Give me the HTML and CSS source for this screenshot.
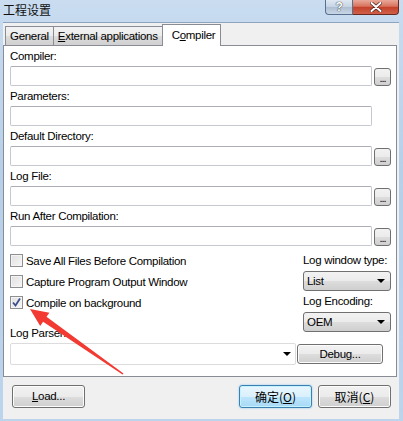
FILE: index.html
```html
<!DOCTYPE html>
<html lang="zh">
<head>
    <meta charset="UTF-8">
    <title>工程设置</title>
    <link rel="stylesheet" href="styles.css">
</head>
<body>
    <div class="window">
        <div class="titlebar">
            <div class="title">工程设置</div>
            <div class="caption">
                <div class="cap-help">?</div>
                <div class="cap-close">
                    <svg width="12" height="10" viewBox="0 0 12 10"><path d="M1.5 1 L10.5 9 M10.5 1 L1.5 9" stroke="#4a2520" stroke-width="3.4" stroke-linecap="round"/><path d="M1.5 1 L10.5 9 M10.5 1 L1.5 9" stroke="#fff" stroke-width="2" stroke-linecap="round"/></svg>
                </div>
            </div>
        </div>

        <div class="client">
            <div class="tabs">
                <div class="tab">General</div>
                <div class="tab"><u>E</u>xternal applications</div>
                <div class="tab active">C<u>o</u>mpiler</div>
            </div>

            <div class="panel">
                <div class="label">Compiler:</div>
                <div class="field-row"><div class="input"></div><div class="browse">...</div></div>
                <div class="label">Parameters:</div>
                <div class="field-row"><div class="input"></div></div>
                <div class="label">Default Directory:</div>
                <div class="field-row"><div class="input"></div><div class="browse">...</div></div>
                <div class="label">Log File:</div>
                <div class="field-row"><div class="input"></div><div class="browse">...</div></div>
                <div class="label">Run After Compilation:</div>
                <div class="field-row"><div class="input"></div><div class="browse">...</div></div>

                <div class="options">
                    <div class="checks">
                        <div class="check"><span class="box"></span>Save All Files Before Compilation</div>
                        <div class="check"><span class="box"></span>Capture Program Output Window</div>
                        <div class="check"><span class="box checked"><svg width="11" height="11" viewBox="0 0 11 11"><path d="M2 5.5 L4.5 8.5 L9 1.5" fill="none" stroke="#3d4f8a" stroke-width="1.8"/></svg></span>Compile on background</div>
                        <div class="parser-label">Log Parser:</div>
                    </div>
                    <div class="side">
                        <div class="side-label">Log window type:</div>
                        <div class="select">List<span class="tri"></span></div>
                        <div class="side-label">Log Encoding:</div>
                        <div class="select">OEM<span class="tri"></span></div>
                    </div>
                </div>

                <div class="parser-row">
                    <div class="combo"><span class="tri"></span></div>
                    <div class="btn debug">Debug...</div>
                </div>
            </div>

            <div class="footer">
                <div class="btn wide"><u>L</u>oad...</div>
                <div class="footer-right">
                    <div class="btn wide default">确定(<u>O</u>)</div>
                    <div class="btn wide">取消(<u>C</u>)</div>
                </div>
            </div>
        </div>

        <svg class="arrow" width="403" height="421" viewBox="0 0 403 421">
            <polygon points="30,309 49.4,312.7 46.5,316.8 123.5,373.6 122.5,374.4 43.1,321.8 40.2,325.9" fill="#f23a32"/>
        </svg>
    </div>
</body>
</html>
```

FILE: styles.css
```css
html, body {
    margin: 0;
    padding: 0;
}
body {
    width: 403px;
    height: 421px;
    overflow: hidden;
    font-family: "Liberation Sans", Arial, sans-serif;
    font-size: 11px;
    letter-spacing: -0.3px;
    color: #000;
    background: linear-gradient(180deg, #c9dcf0 0%, #b7d0ea 40%, #bcd4ec 100%);
}
.window {
    position: relative;
    height: 421px;
}
.titlebar {
    height: 22px;
    display: flex;
    justify-content: space-between;
    padding-left: 3px;
}
.title {
    font-family: "Noto Sans CJK SC", sans-serif;
    font-size: 12px;
    letter-spacing: 0;
    line-height: 20px;
    color: #111;
}
.caption {
    display: flex;
    margin-right: 4px;
    height: 15px;
}
.cap-help, .cap-close {
    height: 14px;
    border: 1px solid #57708f;
    border-top: none;
    display: flex;
    align-items: center;
    justify-content: center;
}
.cap-help {
    width: 26px;
    border-radius: 0 0 0 4px;
    background: linear-gradient(180deg, #dfe8f2 0%, #c4d3e4 50%, #aebfd3 51%, #c8d6e6 100%);
    color: #fff;
    font-weight: bold;
    font-size: 12px;
    text-shadow: 0 0 1px #333, 0 0 1px #333;
}
.cap-close {
    width: 45px;
    border-left: none;
    border-color: #6b2a20;
    border-radius: 0 0 4px 0;
    background: linear-gradient(180deg, #e9a99a 0%, #d8735e 45%, #c4412a 52%, #d0604a 100%);
}
.client {
    margin: 0 4px 0 3px;
    height: 396px;
    background: #f0f0f0;
    border-top: 1px solid #8ea3bd;
}
.tabs {
    display: flex;
    align-items: flex-end;
    height: 22px;
    padding-left: 2px;
}
.tab {
    height: 18px;
    line-height: 18px;
    padding: 0 4px;
    border: 1px solid #898c95;
    border-bottom: none;
    background: linear-gradient(180deg, #f3f3f3 0%, #ebebeb 50%, #dddddd 51%, #d0d0d0 100%);
    margin-right: -1px;
    font-size: 11.5px;
}
.tab.active {
    height: 21px;
    line-height: 20px;
    background: #fff;
    padding: 0 5px 0 9px;
    position: relative;
    z-index: 1;
    margin-bottom: -1px;
}
.panel {
    width: 386px;
    height: 320px;
    border: 1px solid #898c95;
    background: #fff;
    padding: 0 0 10px 6px;
}
.label {
    height: 20px;
    line-height: 20px;
    font-size: 11.5px;
}
.field-row {
    display: flex;
    align-items: center;
    height: 20px;
}
.input {
    width: 360px;
    height: 18px;
    border: 1px solid #c5c8ce;
    border-top-color: #acaeb4;
    border-radius: 2px;
    background: #fff;
}
.browse {
    width: 15px;
    height: 16px;
    margin-left: 2px;
    margin-top: 1px;
    border: 1px solid #707070;
    border-radius: 3px;
    background: linear-gradient(180deg, #f2f2f2 0%, #ebebeb 50%, #dddddd 51%, #cfcfcf 100%);
    font-size: 11px;
    line-height: 18px;
    text-align: center;
    color: #000;
    letter-spacing: -1px;
}
.options {
    display: flex;
    justify-content: space-between;
    margin-top: 4px;
    padding-right: 5px;
}
.check {
    display: flex;
    align-items: center;
    height: 21px;
    font-size: 11.5px;
}
.box {
    width: 11px;
    height: 11px;
    border: 1px solid #8e8f8f;
    background: linear-gradient(135deg, #e0e0e0 0%, #f6f6f6 100%);
    margin-right: 3px;
    box-shadow: inset 0 0 0 1px #f4f4f4;
}
.box.checked {
    display: flex;
}
.parser-label {
    margin-top: 12px;
    height: 17px;
    line-height: 17px;
    font-size: 11.5px;
}
.side {
    width: 88px;
}
.side-label {
    height: 20px;
    line-height: 20px;
    font-size: 11.5px;
    white-space: nowrap;
}
.select {
    position: relative;
    height: 18px;
    line-height: 18px;
    margin-top: 1px;
    padding-left: 3px;
    border: 1px solid #707070;
    border-radius: 3px;
    background: linear-gradient(180deg, #f2f2f2 0%, #ebebeb 50%, #dddddd 51%, #cfcfcf 100%);
    font-size: 11.5px;
}
.tri {
    position: absolute;
    right: 5px;
    top: 7px;
    width: 0;
    height: 0;
    border-left: 4px solid transparent;
    border-right: 4px solid transparent;
    border-top: 4px solid #000;
}
.parser-row {
    display: flex;
    align-items: center;
    margin-top: 1px;
}
.combo {
    position: relative;
    width: 284px;
    height: 20px;
    border: 1px solid #dcdcdc;
    border-radius: 2px;
    background: #fff;
}
.combo .tri {
    right: 4px;
    top: 8px;
}
.btn {
    border: 1px solid #707070;
    border-radius: 3px;
    background: linear-gradient(180deg, #f2f2f2 0%, #ebebeb 50%, #dddddd 51%, #cfcfcf 100%);
    box-shadow: inset 0 0 0 1px #fcfcfc;
    text-align: center;
    font-size: 11.5px;
}
.debug {
    width: 84px;
    height: 18px;
    line-height: 18px;
    margin-left: 1px;
}
.footer {
    display: flex;
    justify-content: space-between;
    padding: 8px 8px 0 9px;
}
.footer-right {
    display: flex;
    gap: 6px;
}
.wide {
    width: 71px;
    height: 21px;
    line-height: 21px;
}
.footer-right .wide {
    font-family: "Noto Sans CJK SC", sans-serif;
    font-size: 12px;
    letter-spacing: 0;
}
.default {
    border-color: #3c7fb1;
    background: linear-gradient(180deg, #eaf6fd 0%, #d9f0fc 50%, #bee6fd 51%, #a7d9f5 100%);
    box-shadow: inset 0 0 0 1px #c4f2ff, 0 0 2px #7dc2ef;
}
.arrow {
    position: absolute;
    left: 0;
    top: 0;
    pointer-events: none;
}
```
